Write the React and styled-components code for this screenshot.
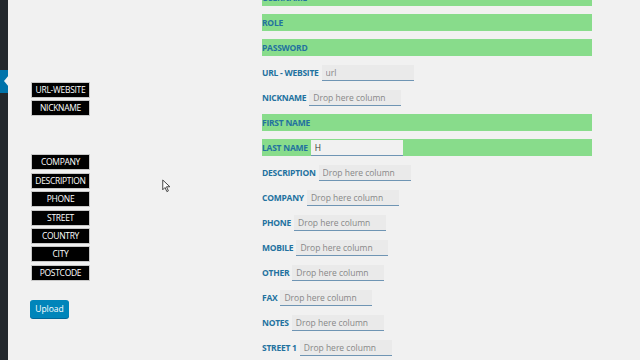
import React from "react";
import styled, { createGlobalStyle } from "styled-components";

const GlobalStyle = createGlobalStyle`
  html, body {
    margin: 0;
    padding: 0;
    background: #f1f1f1;
    overflow: hidden;
  }
  body {
    font-family: "Open Sans", "Noto Sans", sans-serif;
  }
`;

const leftTop = ["URL-WEBSITE", "NICKNAME"];
const leftBottom = ["COMPANY", "DESCRIPTION", "PHONE", "STREET", "COUNTRY", "CITY", "POSTCODE"];

const fields = [
  { label: "USERNAME", done: true },
  { label: "ROLE", done: true },
  { label: "PASSWORD", done: true },
  { label: "URL - WEBSITE", placeholder: "url" },
  { label: "NICKNAME" },
  { label: "FIRST NAME", done: true },
  { label: "LAST NAME", done: true, value: "H" },
  { label: "DESCRIPTION" },
  { label: "COMPANY" },
  { label: "PHONE" },
  { label: "MOBILE" },
  { label: "OTHER" },
  { label: "FAX" },
  { label: "NOTES" },
  { label: "STREET 1" },
];

export default function App() {
  return (
    <>
      <GlobalStyle />
      <Page>
        <Sidebar>
          <Current />
        </Sidebar>
        <Columns>
          <LeftPanel>
            <TagGroup>
              {leftTop.map((t) => (
                <Tag key={t}>{t}</Tag>
              ))}
            </TagGroup>
            <TagGroup $top={38}>
              {leftBottom.map((t) => (
                <Tag key={t}>{t}</Tag>
              ))}
            </TagGroup>
            <UploadButton>Upload</UploadButton>
          </LeftPanel>
          <FieldList>
            {fields.map((f) => (
              <Row key={f.label} $done={f.done}>
                <Label>{f.label}</Label>
                {(!f.done || f.value) && (
                  <Input
                    $filled={!!f.value}
                    readOnly
                    value={f.value || ""}
                    placeholder={f.placeholder || "Drop here column"}
                  />
                )}
              </Row>
            ))}
          </FieldList>
        </Columns>
        <Cursor viewBox="0 0 12 18" width="9" height="14">
          <path
            d="M1 1 L1 14 L4 11 L6.5 16.5 L8.5 15.5 L6 10 L10.5 10 Z"
            fill="#fff"
            stroke="#333"
            strokeWidth="1.2"
            strokeLinejoin="round"
          />
        </Cursor>
      </Page>
    </>
  );
}

const Page = styled.div`
  position: relative;
  display: flex;
  width: 640px;
  height: 360px;
  overflow: hidden;
  background: #f1f1f1;
`;

const Sidebar = styled.div`
  width: 8px;
  flex-shrink: 0;
  background: #23282d;
  padding-top: 70px;
  box-sizing: border-box;
`;

const Current = styled.div`
  position: relative;
  height: 23px;
  width: 8px;
  background: #0073aa;

  &::after {
    content: "";
    position: absolute;
    right: -1px;
    top: 5px;
    border-style: solid;
    border-width: 6px 5px 6px 0;
    border-color: transparent #f1f1f1 transparent transparent;
  }
`;

const Columns = styled.div`
  display: flex;
  flex: 1;
`;

const LeftPanel = styled.div`
  width: 254px;
  flex-shrink: 0;
  padding-left: 23px;
  padding-top: 82px;
  box-sizing: border-box;
  display: flex;
  flex-direction: column;
  align-items: flex-start;
`;

const TagGroup = styled.div`
  display: flex;
  flex-direction: column;
  gap: 2.4px;
  margin-top: ${(p) => p.$top || 0}px;
`;

const Tag = styled.div`
  width: 59px;
  height: 16px;
  box-sizing: border-box;
  background: #000;
  border: 1px solid #c8c8c8;
  color: #fff;
  font-size: 8.5px;
  line-height: 14px;
  text-align: center;
  white-space: nowrap;
  letter-spacing: -0.3px;
`;

const UploadButton = styled.button`
  margin-top: 19px;
  margin-left: -1px;
  width: 39px;
  height: 18px;
  padding: 0;
  border: none;
  border-radius: 3px;
  background: #0085ba;
  color: #fff;
  font-family: "Open Sans", "Noto Sans", sans-serif;
  font-size: 8.5px;
  box-shadow: 0 1px 0 #006799;
`;

const FieldList = styled.div`
  width: 330px;
  margin-top: -11px;
  display: flex;
  flex-direction: column;
  gap: 8px;
`;

const Row = styled.div`
  display: flex;
  align-items: center;
  height: 17px;
  flex-shrink: 0;
  background: ${(p) => (p.$done ? "#88dc8b" : "transparent")};
`;

const Label = styled.span`
  font-size: 8.5px;
  font-weight: 700;
  color: #23729f;
  white-space: nowrap;
  margin-right: 3px;
  letter-spacing: -0.25px;
`;

const Input = styled.input`
  width: 92px;
  height: 16px;
  box-sizing: border-box;
  border: none;
  border-bottom: 1px solid #6f95b4;
  background: ${(p) => (p.$filled ? "#f1f1f1" : "#eaeaea")};
  padding: 0 4px;
  font-family: "Open Sans", "Noto Sans", sans-serif;
  font-size: 8.5px;
  color: #333;
  outline: none;

  &::placeholder {
    color: #888;
  }
`;

const Cursor = styled.svg`
  position: absolute;
  left: 162px;
  top: 179px;
`;
